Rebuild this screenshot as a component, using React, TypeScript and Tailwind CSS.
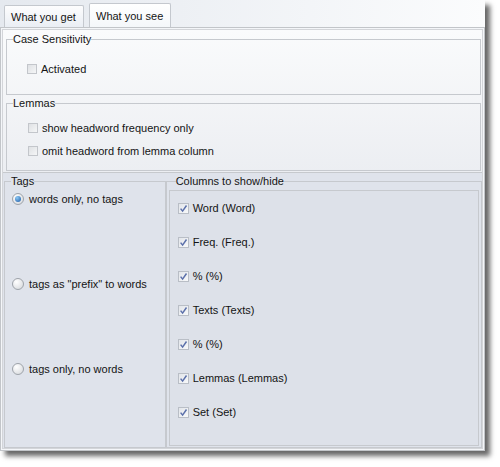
import type { ReactNode } from "react";

const font = "font-['Liberation_Sans',Arial,sans-serif] text-[11px] leading-[14px] text-[#141414]";

function Box({ checked = false }: { checked?: boolean }) {
  return (
    <span
      className={
        checked
          ? "flex h-[11px] w-[11px] shrink-0 items-center justify-center border border-[#b9bec6] bg-gradient-to-br from-[#e2e5ea] to-[#f8f9fa]"
          : "flex h-[10px] w-[10px] shrink-0 border border-[#c3c6cb] bg-gradient-to-br from-[#dfe1e4] to-[#f5f6f7]"
      }
    >
      {checked ? (
        <svg width="9" height="9" viewBox="0 0 9 9" aria-hidden="true">
          <path d="M1.6 4.6 L3.6 7.1 L7.5 1.5" fill="none" stroke="#5b70aa" strokeWidth="1.5" />
        </svg>
      ) : null}
    </span>
  );
}

function Radio({ selected = false }: { selected?: boolean }) {
  return (
    <span className="flex h-[12px] w-[12px] shrink-0 items-center justify-center rounded-full border border-[#9ea3aa] bg-[radial-gradient(circle_at_35%_30%,#ffffff,#d3d6da)]">
      {selected ? (
        <span className="h-[6px] w-[6px] rounded-full bg-[radial-gradient(circle_at_35%_30%,#8cc8f4,#1c5aa6)]" />
      ) : null}
    </span>
  );
}

function Group({
  title,
  className,
  legendClass = "ml-[6px]",
  children,
}: {
  title: string;
  className?: string;
  legendClass?: string;
  children: ReactNode;
}) {
  return (
    <fieldset className={`border border-[#c6c9ce] ${className ?? ""}`}>
      <legend className={`${legendClass} px-0 leading-[14px]`}>{title}</legend>
      {children}
    </fieldset>
  );
}

const columns = [
  "Word (Word)",
  "Freq. (Freq.)",
  "% (%)",
  "Texts (Texts)",
  "% (%)",
  "Lemmas (Lemmas)",
  "Set (Set)",
];

export default function App() {
  return (
    <div className={`h-[467px] w-[500px] bg-white ${font}`}>
      <div className="flex h-[451px] w-[485px] flex-col bg-[#f4f6f9] shadow-[5px_5px_5px_rgba(0,0,0,0.6)]">
        <div className="flex h-[27px] items-end gap-[5px] bg-gradient-to-r from-[#e5e9ef] to-[#fbfcfd] pl-[4px]">
          <div className="flex h-[22px] w-[80px] items-center rounded-t-[2px] border border-b-0 border-[#c4c8ce] bg-gradient-to-b from-[#fdfdfe] to-[#eaeef4] pl-[6px]">
            What you get
          </div>
          <div className="flex h-[24px] w-[82px] items-center rounded-t-[2px] border border-b-0 border-[#c4c8ce] bg-gradient-to-b from-[#ffffff] to-[#f4f7fa] pl-[6px]">
            What you see
          </div>
        </div>

        <div className="flex flex-1 flex-col border border-[#c2c5c9] p-[1px]">
          <div className="flex flex-1 flex-col border border-[#d3d5d9]">
            <div className="flex flex-col border-b border-[#c6c9cd] bg-gradient-to-b from-[#fafbfc] to-[#eceef2] pb-[1px] pl-[3px] pr-[1px] pt-[2px]">
              <Group title="Case Sensitivity" className="h-[63px]">
                <div className="flex items-center gap-[4px] pl-[20px] pt-[16px]">
                  <Box />
                  <span>Activated</span>
                </div>
              </Group>
              <Group title="Lemmas" className="mt-[1px] h-[75px]">
                <div className="flex flex-col gap-[9px] pl-[21px] pt-[11px]">
                  <div className="flex items-center gap-[4px]">
                    <Box />
                    <span>show headword frequency only</span>
                  </div>
                  <div className="flex items-center gap-[4px]">
                    <Box />
                    <span>omit headword from lemma column</span>
                  </div>
                </div>
              </Group>
            </div>

            <div className="flex flex-1 bg-[#dfe3eb] pl-[1px] pt-[1px]">
              <Group title="Tags" className="h-[274px] w-[162px]">
                <div className="flex flex-col gap-[71px] pl-[7px] pt-[4px]">
                  <div className="flex items-center gap-[5px]">
                    <Radio selected />
                    <span>words only, no tags</span>
                  </div>
                  <div className="flex items-center gap-[5px]">
                    <Radio />
                    <span>tags as &quot;prefix&quot; to words</span>
                  </div>
                  <div className="flex items-center gap-[5px]">
                    <Radio />
                    <span>tags only, no words</span>
                  </div>
                </div>
              </Group>
              <Group
                title="Columns to show/hide"
                legendClass="ml-[7px]"
                className="h-[274px] w-[317px] px-[2px] pb-[2px]"
              >
                <div className="mt-[2px] flex h-[256px] flex-col gap-[20px] border border-[#c6c9ce] bg-[#dde1e9] pl-[8px] pt-[10px]">
                  {columns.map((c, i) => (
                    <div key={i} className="flex items-center gap-[4px]">
                      <Box checked />
                      <span>{c}</span>
                    </div>
                  ))}
                </div>
              </Group>
            </div>
          </div>
        </div>
      </div>
    </div>
  );
}
